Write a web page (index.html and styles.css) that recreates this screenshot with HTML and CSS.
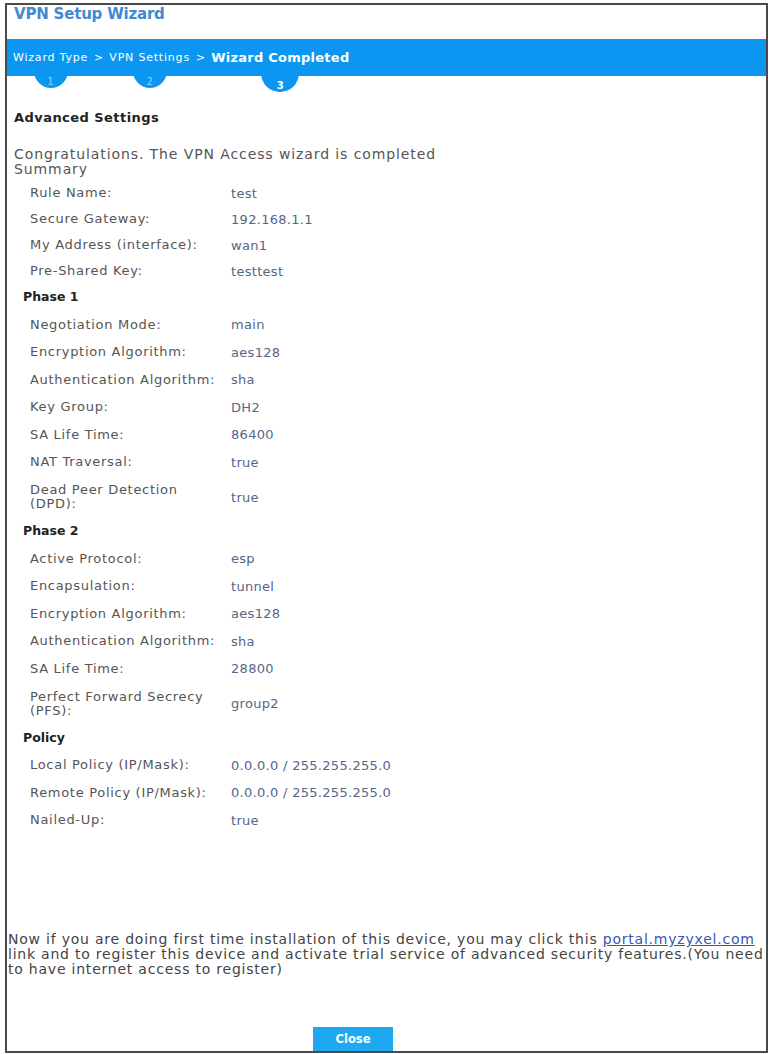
FILE: index.html
```html
<!DOCTYPE html>
<html>
<head>
<meta charset="utf-8">
<link rel="stylesheet" href="styles.css">
</head>
<body>
<div class="frame">
  <div class="title">VPN Setup Wizard</div>
  <div class="bar">
    <div class="step"><span class="step-label">Wizard Type</span><span class="tab"><span class="num">1</span></span></div>
    <span class="sep">&gt;</span>
    <div class="step"><span class="step-label">VPN Settings</span><span class="tab"><span class="num">2</span></span></div>
    <span class="sep">&gt;</span>
    <div class="step current"><span class="step-label">Wizard Completed</span><span class="tab"><span class="num">3</span></span></div>
  </div>
  <div class="content">
    <div class="adv">Advanced Settings</div>
    <p class="congrats">Congratulations. The VPN Access wizard is completed<br>Summary</p>
    <div class="group summary">
      <div class="row"><span class="label">Rule Name:</span><span class="value">test</span></div>
      <div class="row"><span class="label">Secure Gateway:</span><span class="value">192.168.1.1</span></div>
      <div class="row"><span class="label">My Address (interface):</span><span class="value">wan1</span></div>
      <div class="row"><span class="label">Pre-Shared Key:</span><span class="value">testtest</span></div>
    </div>
    <div class="section-title">Phase 1</div>
    <div class="group">
      <div class="row"><span class="label">Negotiation Mode:</span><span class="value">main</span></div>
      <div class="row"><span class="label">Encryption Algorithm:</span><span class="value">aes128</span></div>
      <div class="row"><span class="label">Authentication Algorithm:</span><span class="value">sha</span></div>
      <div class="row"><span class="label">Key Group:</span><span class="value">DH2</span></div>
      <div class="row"><span class="label">SA Life Time:</span><span class="value">86400</span></div>
      <div class="row"><span class="label">NAT Traversal:</span><span class="value">true</span></div>
      <div class="row two"><span class="label">Dead Peer Detection<br>(DPD):</span><span class="value">true</span></div>
    </div>
    <div class="section-title">Phase 2</div>
    <div class="group">
      <div class="row"><span class="label">Active Protocol:</span><span class="value">esp</span></div>
      <div class="row"><span class="label">Encapsulation:</span><span class="value">tunnel</span></div>
      <div class="row"><span class="label">Encryption Algorithm:</span><span class="value">aes128</span></div>
      <div class="row"><span class="label">Authentication Algorithm:</span><span class="value">sha</span></div>
      <div class="row"><span class="label">SA Life Time:</span><span class="value">28800</span></div>
      <div class="row two"><span class="label">Perfect Forward Secrecy<br>(PFS):</span><span class="value">group2</span></div>
    </div>
    <div class="section-title">Policy</div>
    <div class="group">
      <div class="row"><span class="label">Local Policy (IP/Mask):</span><span class="value">0.0.0.0 / 255.255.255.0</span></div>
      <div class="row"><span class="label">Remote Policy (IP/Mask):</span><span class="value">0.0.0.0 / 255.255.255.0</span></div>
      <div class="row"><span class="label">Nailed-Up:</span><span class="value">true</span></div>
    </div>
  </div>
  <p class="note">Now if you are doing first time installation of this device, you may click this <a class="link" href="#">portal.myzyxel.com</a><br>link and to register this device and activate trial service of advanced security features.(You need<br>to have internet access to register)</p>
  <div class="actions"><button class="close" type="button">Close</button></div>
</div>
</body>
</html>
```
FILE: styles.css
```css
html, body {
  margin: 0;
  padding: 0;
  background: #ffffff;
}
body {
  font-family: "DejaVu Sans", "Liberation Sans", sans-serif;
  color: #555555;
}
.frame {
  box-sizing: border-box;
  margin: 3px 0 0 5px;
  width: 763px;
  height: 1050px;
  border: 2px solid #4a4a4a;
  display: flex;
  flex-direction: column;
  overflow: hidden;
}
.title {
  height: 34px;
  flex: none;
  padding: 0 0 0 7px;
  line-height: 19px;
  font-size: 15px;
  font-weight: bold;
  color: #3f8ad2;
  letter-spacing: -0.2px;
}
.bar {
  height: 37px;
  background: #0b97f1;
  display: flex;
  align-items: stretch;
  padding-left: 6px;
  color: #ffffff;
  flex: none;
}
.step {
  position: relative;
  display: flex;
  align-items: center;
}
.step-label {
  font-size: 11px;
  letter-spacing: 0.8px;
  position: relative;
  z-index: 2;
}
.current .step-label {
  font-size: 13px;
  font-weight: bold;
  letter-spacing: 0.25px;
}
.sep {
  display: flex;
  align-items: center;
  font-size: 11px;
  margin: 0 6px;
}
.tab {
  position: absolute;
  left: 50%;
  top: 15px;
  width: 34px;
  height: 34px;
  margin-left: -17px;
  border-radius: 50%;
  background: #0b97f1;
  box-sizing: border-box;
  padding-top: 23px;
  text-align: center;
  z-index: 1;
}
.num {
  display: block;
  font-size: 10px;
  line-height: 10px;
  color: rgba(255, 255, 255, 0.55);
}
.current .tab {
  top: 15px;
  width: 38px;
  height: 38px;
  margin-left: -19px;
  padding-top: 27px;
}
.current .num {
  color: #ffffff;
  font-weight: bold;
}
.content {
  padding: 0 0 0 7px;
}
.adv {
  margin-top: 34px;
  font-size: 13px;
  font-weight: bold;
  line-height: 16px;
  color: #222222;
  letter-spacing: 0.45px;
}
.congrats {
  margin: 21px 0 3px 0;
  font-size: 14px;
  line-height: 15px;
  color: #555555;
  letter-spacing: 0.9px;
}
.group {
  padding-left: 16px;
}
.row {
  display: flex;
  align-items: center;
  height: 27.5px;
  font-size: 13px;
}
.summary .row {
  height: 26px;
}
.row.two {
  height: 42px;
}
.label {
  width: 201px;
  flex: none;
  line-height: 14px;
  color: #555555;
  letter-spacing: 0.7px;
}
.value {
  color: #56658a;
  letter-spacing: 0.3px;
}
.section-title {
  height: 27px;
  box-sizing: border-box;
  padding-left: 9px;
  line-height: 25px;
  font-size: 12.5px;
  font-weight: bold;
  color: #222222;
}
.note {
  margin: 98px 0 0 0;
  padding-left: 1px;
  font-size: 14px;
  line-height: 15px;
  color: #444444;
  white-space: nowrap;
  letter-spacing: 0.78px;
}
.link {
  color: #3956b4;
  text-decoration: underline;
}
.actions {
  margin-top: auto;
  display: flex;
  padding-left: 306px;
}
.close {
  width: 80px;
  height: 24px;
  border: none;
  background: #1ea8ef;
  color: #ffffff;
  font-family: "DejaVu Sans", "Liberation Sans", sans-serif;
  font-weight: bold;
  font-size: 11.5px;
  padding: 0;
}
```
